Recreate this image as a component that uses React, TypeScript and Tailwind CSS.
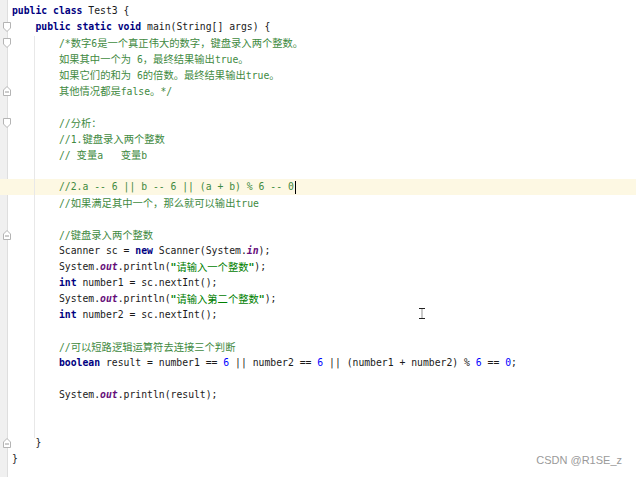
import React from 'react';

type Seg = [string, string?];

const K = 'font-bold text-[#000080]';
const C = 'text-[#3f8a3f]';
const S = 'font-bold text-[#008000]';
const N = 'text-[#0000ff]';
const F = 'font-bold italic text-[#660e7a]';

interface Line {
  indent: number;
  segs: Seg[];
  fold?: 'start' | 'end';
  current?: boolean;
}

const lines: Line[] = [
  { indent: 0, segs: [['public class', K], [' Test3 {']] },
  { indent: 4, segs: [['public static void', K], [' main(String[] args) {']], fold: 'start' },
  { indent: 8, segs: [['/*数字6是一个真正伟大的数字，键盘录入两个整数。', C]], fold: 'start' },
  { indent: 8, segs: [['如果其中一个为 6，最终结果输出true。', C]] },
  { indent: 8, segs: [['如果它们的和为 6的倍数。最终结果输出true。', C]] },
  { indent: 8, segs: [['其他情况都是false。*/', C]], fold: 'end' },
  { indent: 0, segs: [] },
  { indent: 8, segs: [['//分析：', C]], fold: 'start' },
  { indent: 8, segs: [['//1.键盘录入两个整数', C]] },
  { indent: 8, segs: [['// 变量a   变量b', C]] },
  { indent: 0, segs: [] },
  { indent: 8, segs: [['//2.a -- 6 || b -- 6 || (a + b) % 6 -- 0', C]], current: true },
  { indent: 8, segs: [['//如果满足其中一个，那么就可以输出true', C]] },
  { indent: 0, segs: [] },
  { indent: 8, segs: [['//键盘录入两个整数', C]], fold: 'end' },
  { indent: 8, segs: [['Scanner sc = '], ['new', K], [' Scanner(System.'], ['in', F], [');']] },
  { indent: 8, segs: [['System.'], ['out', F], ['.println('], ['"请输入一个整数"', S], [');']] },
  { indent: 8, segs: [['int', K], [' number1 = sc.nextInt();']] },
  { indent: 8, segs: [['System.'], ['out', F], ['.println('], ['"请输入第二个整数"', S], [');']] },
  { indent: 8, segs: [['int', K], [' number2 = sc.nextInt();']] },
  { indent: 0, segs: [] },
  { indent: 8, segs: [['//可以短路逻辑运算符去连接三个判断', C]] },
  {
    indent: 8,
    segs: [
      ['boolean', K],
      [' result = number1 == '],
      ['6', N],
      [' || number2 == '],
      ['6', N],
      [' || (number1 + number2) % '],
      ['6', N],
      [' == '],
      ['0', N],
      [';'],
    ],
  },
  { indent: 0, segs: [] },
  { indent: 8, segs: [['System.'], ['out', F], ['.println(result);']] },
  { indent: 0, segs: [] },
  { indent: 0, segs: [] },
  { indent: 4, segs: [['}']], fold: 'end' },
  { indent: 0, segs: [['}']] },
];

// CJK glyphs are wider than the mono cells, render them in their own font
function Text({ text, cls }: { text: string; cls?: string }) {
  const parts = text.split(/([\u3000-\u303f\u4e00-\u9fff\uff00-\uffef]+)/);
  return (
    <span className={cls}>
      {parts.map((p, i) =>
        i % 2 === 1 ? (
          <span key={i} className="font-['Noto_Sans_CJK_SC',sans-serif] text-[10.3px] font-normal not-italic">
            {p}
          </span>
        ) : (
          <React.Fragment key={i}>{p}</React.Fragment>
        )
      )}
    </span>
  );
}

function FoldMark({ type }: { type: 'start' | 'end' }) {
  return (
    <svg width="8" height="10" viewBox="0 0 8 10" className="absolute left-[3px] top-[3px]">
      {type === 'start' ? (
        <path d="M0.5 0.5 H7.5 V6 L4 9.5 L0.5 6 Z" fill="#fff" stroke="#b4b4b4" />
      ) : (
        <>
          <path d="M0.5 9.5 H7.5 V4 L4 0.5 L0.5 4 Z" fill="#fff" stroke="#b4b4b4" />
          <path d="M2 6 H6" stroke="#9a9a9a" />
        </>
      )}
    </svg>
  );
}

export default function App() {
  return (
    <div className="relative h-[477px] w-full overflow-hidden bg-white font-['DejaVu_Sans_Mono',monospace] text-[9.75px] text-[#1a1a1a]">
      <div className="flex h-full">
        <div className="flex w-full flex-col bg-[linear-gradient(to_right,#f0f0f0_7px,#dedede_7px,#dedede_8px,#ffffff_8px)] pt-[3px]">
          {lines.map((l, i) => (
            <div key={i} className={`flex h-4 items-center whitespace-pre leading-4 ${l.current ? 'bg-[#fdf8e3]' : ''}`}>
              <div className="relative h-4 w-3 shrink-0">{l.fold && <FoldMark type={l.fold} />}</div>
              <div className="relative flex items-center">
                <span>{' '.repeat(l.indent)}</span>
                {l.segs.map((s, j) => (
                  <Text key={j} text={s[0]} cls={s[1]} />
                ))}
                {l.current && <span className="ml-px inline-block h-[13px] w-px bg-black" />}
              </div>
            </div>
          ))}
        </div>
      </div>

      {/* indent guide */}
      <div className="absolute left-[34px] top-[36px] h-[402px] w-px bg-[#e8e8e8]" />

      {/* mouse I-beam */}
      <svg width="6" height="11" viewBox="0 0 6 11" className="absolute left-[419px] top-[308px]">
        <path d="M0 0.5 H6 M0 10.5 H6" stroke="#222" />
        <path d="M3 1 V10" stroke="#bbb" strokeWidth="1.6" />
      </svg>

      <div className="absolute bottom-[9px] right-[14px] font-['Liberation_Sans',sans-serif] text-[11px] text-[#9a9a9a]">
        CSDN @R1SE_z
      </div>
    </div>
  );
}
